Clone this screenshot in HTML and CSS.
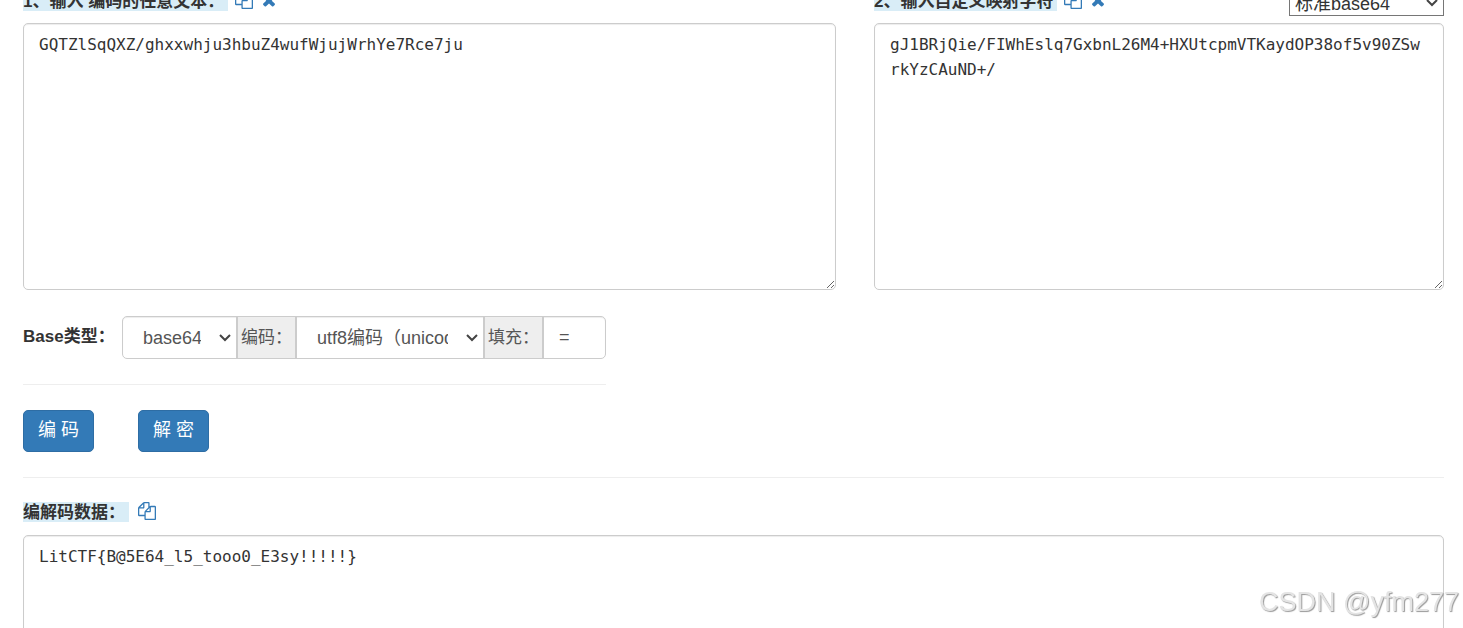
FILE: index.html
```html
<!DOCTYPE html>
<html lang="zh-CN">
<head>
    <meta charset="UTF-8">
    <meta name="viewport" content="width=device-width, initial-scale=1.0">
    <title>Base编码</title>
    <link rel="stylesheet" href="styles.css">
</head>
<body>

    <svg class="sprite" aria-hidden="true">
        <symbol id="icon-copy" viewBox="0 0 1792 1792">
            <path d="M1696 384q40 0 68 28t28 68v1216q0 40-28 68t-68 28h-960q-40 0-68-28t-28-68v-288h-544q-40 0-68-28t-28-68v-672q0-40 20-88t48-76l408-408q28-28 76-48t88-20h416q40 0 68 28t28 68v328q68-40 128-40h416zm-544 213l-299 299h299v-299zm-640-384l-299 299h299v-299zm196 647l316-316v-416h-384v416q0 40-28 68t-68 28h-416v640h512v-256q0-40 20-88t48-76zm956 804v-1152h-384v416q0 40-28 68t-68 28h-416v640h896z"/>
        </symbol>
        <symbol id="icon-clear" viewBox="0 0 1792 1792">
            <path d="M1490 1322q0 40-28 68l-136 136q-28 28-68 28t-68-28l-294-294-294 294q-28 28-68 28t-68-28l-136-136q-28-28-28-68t28-68l294-294-294-294q-28-28-28-68t28-68l136-136q28-28 68-28t68 28l294 294 294-294q28-28 68-28t68 28l136 136q28 28 28 68t-28 68l-294 294 294 294q28 28 28 68z"/>
        </symbol>
    </svg>

    <main class="page">
        <div class="inputs">
            <div class="field">
                <div class="field-header">
                    <label class="field-label" for="source">1、输入 编码的任意文本：</label>
                    <a class="icon-link" href="#" aria-label="复制"><svg><use href="#icon-copy"/></svg></a>
                    <a class="icon-link" href="#" aria-label="清空"><svg><use href="#icon-clear"/></svg></a>
                </div>
                <textarea id="source" class="form-control" spellcheck="false">GQTZlSqQXZ/ghxxwhju3hbuZ4wufWjujWrhYe7Rce7ju</textarea>
            </div>
            <div class="field">
                <div class="field-header">
                    <label class="field-label" for="charset">2、输入自定义映射字符</label>
                    <a class="icon-link" href="#" aria-label="复制"><svg><use href="#icon-copy"/></svg></a>
                    <a class="icon-link" href="#" aria-label="清空"><svg><use href="#icon-clear"/></svg></a>
                    <select class="preset" aria-label="映射">
                        <option>标准base64</option>
                    </select>
                </div>
                <textarea id="charset" class="form-control" spellcheck="false">gJ1BRjQie/FIWhEslq7GxbnL26M4+HXUtcpmVTKaydOP38of5v90ZSwrkYzCAuND+/</textarea>
            </div>
        </div>

        <div class="options">
            <label class="options-label" for="base-type">Base类型：</label>
            <div class="input-group">
                <select id="base-type" class="group-control base-type">
                    <option>base64</option>
                </select>
                <label class="addon" for="encoding">编码：</label>
                <select id="encoding" class="group-control encoding">
                    <option>utf8编码（unicode编码）</option>
                </select>
                <label class="addon" for="padding">填充：</label>
                <input id="padding" class="group-control fill" type="text" value="=">
            </div>
        </div>

        <div class="actions">
            <button type="button" class="btn">编 码</button>
            <button type="button" class="btn">解 密</button>
        </div>

        <div class="result">
            <div class="result-header">
                <label class="field-label" for="result">编解码数据：</label>
                <a class="icon-link" href="#" aria-label="复制"><svg><use href="#icon-copy"/></svg></a>
            </div>
            <textarea id="result" class="form-control" spellcheck="false">LitCTF{B@5E64_l5_tooo0_E3sy!!!!!}</textarea>
        </div>
    </main>

    <div class="watermark">CSDN @yfm277</div>

</body>
</html>
```

FILE: styles.css
```css
* {
    box-sizing: border-box;
}
body {
    margin: 0;
    overflow: hidden;
    font-family: "Liberation Sans", "Noto Sans CJK SC", sans-serif;
    font-size: 17px;
    line-height: 25px;
    color: #333;
    background-color: #fff;
}
.sprite {
    display: none;
}
.page {
    height: 100vh;
    padding: 0 19px 0 23px;
    overflow: hidden;
}
.inputs {
    display: grid;
    grid-template-columns: 813fr 570fr;
    gap: 38px;
}
/* the header row hangs off the top edge of the page */
.field-header {
    display: flex;
    align-items: flex-end;
    height: 11px;
    margin-bottom: 12px;
}
.field-label {
    padding: 2px 4px 0 0;
    line-height: 18px;
    font-weight: bold;
    white-space: nowrap;
    background-color: #d9edf7;
}
.icon-link {
    display: block;
    height: 20px;
    margin-left: 7px;
    color: #337ab7;
}
.icon-link svg {
    display: block;
    width: 18px;
    height: 18px;
    fill: currentColor;
}
select {
    appearance: none;
    background-image: url("data:image/svg+xml,%3Csvg xmlns='http://www.w3.org/2000/svg' width='12' height='8'%3E%3Cpath d='M1 1l5 5 5-5' fill='none' stroke='%23444' stroke-width='2'/%3E%3C/svg%3E");
    background-repeat: no-repeat;
    background-position: right 5px center;
}
.preset {
    width: 155px;
    height: 27px;
    margin: 0 0 -5px auto;
    padding: 2px 20px 0 5px;
    font-family: inherit;
    font-size: 18px;
    color: #333;
    background-color: #fff;
    border: 1px solid #767676;
    border-radius: 0;
}
.form-control {
    display: block;
    width: 100%;
    height: 267px;
    padding: 8px 15px;
    font-family: "DejaVu Sans Mono", monospace;
    font-size: 16px;
    line-height: 25px;
    word-break: break-all;
    color: #333;
    background-color: #fff;
    border: 1px solid #ccc;
    border-radius: 5px;
    box-shadow: inset 0 1px 1px rgba(0, 0, 0, 0.075);
}
.options {
    display: inline-flex;
    margin-top: 26px;
    padding-bottom: 25px;
    border-bottom: 1px solid #eee;
}
.options-label {
    width: 99px;
    line-height: 41px;
    font-weight: bold;
    white-space: nowrap;
}
.input-group {
    display: flex;
    height: 43px;
    border: 1px solid #ccc;
    border-radius: 5px;
    box-shadow: inset 0 1px 1px rgba(0, 0, 0, 0.075);
}
.group-control {
    height: 100%;
    padding: 0 35px 0 20px;
    font-family: inherit;
    font-size: 18px;
    color: #555;
    background-color: transparent;
    border: 0;
}
.base-type {
    width: 113px;
}
.encoding {
    width: 186px;
}
.fill {
    width: 61px;
    padding: 0 15px;
}
.addon {
    width: 61px;
    padding-left: 3px;
    line-height: 41px;
    white-space: nowrap;
    color: #555;
    background-color: #eee;
    border: solid #ccc;
    border-width: 0 2px;
}
.actions {
    display: flex;
    gap: 44px;
    padding: 25px 0;
    border-bottom: 1px solid #eee;
}
.btn {
    height: 42px;
    padding: 0 14px 2px;
    font-family: inherit;
    font-size: 18px;
    line-height: 25px;
    color: #fff;
    background-color: #337ab7;
    border: 1px solid #2e6da4;
    border-radius: 5px;
    cursor: pointer;
}
.result-header {
    display: flex;
    margin: 24px 0 13px;
}
.result-header .icon-link {
    margin-left: 9px;
}
.watermark {
    position: fixed;
    right: 4px;
    bottom: 8px;
    font-size: 27px;
    line-height: 36px;
    color: #e4e4e4;
    text-shadow: 1px 1px 1px #999;
    pointer-events: none;
}
```
